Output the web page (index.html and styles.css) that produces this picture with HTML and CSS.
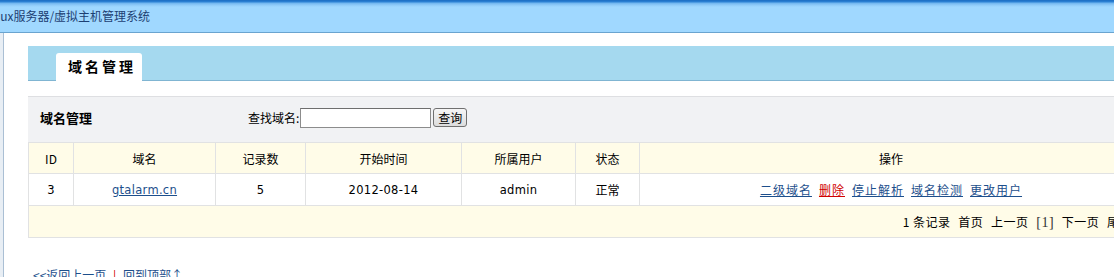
FILE: index.html
```html
<!DOCTYPE html>
<html lang="zh-CN">
<head>
  <meta charset="utf-8">
  <title>域名管理</title>
  <link rel="stylesheet" href="styles.css">
</head>
<body>

  <!-- Top bar -->
  <div class="topbar">
    <span class="title">Linux服务器/虚拟主机管理系统</span>
  </div>

  <div class="frame">
    <div class="main">

      <!-- Tab strip -->
      <div class="tabbar">
        <div class="tab">域名管理</div>
      </div>

      <div class="panel">
        <div class="toolbar">
          <span class="toolbar-title">域名管理</span>
          <form class="search">
            <label for="q">查找域名:</label>
            <input type="text" id="q" />
            <button type="button">查询</button>
          </form>
        </div>

        <table class="list">
          <thead>
            <tr>
              <th class="c-id">ID</th>
              <th class="c-domain">域名</th>
              <th class="c-count">记录数</th>
              <th class="c-date">开始时间</th>
              <th class="c-user">所属用户</th>
              <th class="c-state">状态</th>
              <th>操作</th>
            </tr>
          </thead>
          <tbody>
            <tr>
              <td class="num">3</td>
              <td class="num"><a href="#">gtalarm.cn</a></td>
              <td class="num">5</td>
              <td class="num">2012-08-14</td>
              <td class="num">admin</td>
              <td>正常</td>
              <td>
                <div class="ops">
                  <a href="#">二级域名</a>
                  <a href="#" class="danger">删除</a>
                  <a href="#">停止解析</a>
                  <a href="#">域名检测</a>
                  <a href="#">更改用户</a>
                </div>
              </td>
            </tr>
          </tbody>
          <tfoot>
            <tr>
              <td colspan="7" class="pager">
                <span>1 条记录</span>
                <span>首页</span>
                <span>上一页</span>
                <span class="cur">[1]</span>
                <span>下一页</span>
                <span>尾页</span>
              </td>
            </tr>
          </tfoot>
        </table>
      </div>

      <div class="backlinks">
        <a href="#">&lt;&lt;返回上一页</a>
        <span class="sep">|</span>
        <a href="#">回到顶部↑</a>
      </div>

    </div>
  </div>

</body>
</html>
```

FILE: styles.css
```css
* {
  box-sizing: border-box;
  margin: 0;
  padding: 0;
}

html,
body {
  overflow: hidden;
}

body {
  font-family: "Noto Sans CJK SC", "DejaVu Sans", sans-serif;
  font-size: 12px;
  color: black;
  background: white;
  width: 1160px;
}

/* top bar */
.topbar {
  height: 33px;
  background: linear-gradient(to bottom, #1b6cc2 0px, #2f84d6 2px, #6fb4ee 3px, #8fcaf8 5px, #a0d8ff 7px, #a0d8ff 100%);
  border-bottom: 1px solid #6aa4cf;
  padding-top: 9px;
  line-height: 14px;
  overflow: hidden;
  white-space: nowrap;
}

.title {
  display: inline-block;
  margin-left: -17px;
  color: #1d3f73;
  font-size: 12px;
}

/* page frame */
.frame {
  background: #e8eef4;
  padding-left: 3px;
}

.main {
  background: white;
  border-left: 1px solid #aabfd4;
  padding: 13px 0 12px 24px;
}

.tabbar {
  height: 35px;
  background: #a5d9ef;
  border-bottom: 1px solid #80b5d2;
  padding-top: 7px;
  padding-left: 28px;
}

.tab {
  width: 86px;
  height: 28px;
  background: white;
  border-radius: 3px 3px 0 0;
  padding-left: 12px;
  line-height: 27px;
  font-size: 14px;
  font-weight: bold;
  letter-spacing: 3px;
}

.panel {
  margin-top: 15px;
  background: #f1f2f4;
  border-top: 1px solid #dedfe2;
}

.toolbar {
  display: flex;
  align-items: center;
  height: 45px;
  padding: 0 12px 4px;
}

.toolbar-title {
  font-size: 13px;
  font-weight: bold;
  width: 208px;
}

.search {
  display: flex;
  align-items: center;
}

.search input {
  width: 131px;
  height: 20px;
  border: 1px solid #8c8c8c;
  border-top-color: #6e6e6e;
  background: white;
  margin-left: 1px;
}

.search button {
  width: 34px;
  height: 19px;
  margin-left: 2px;
  font-family: inherit;
  font-size: 12px;
  line-height: 15px;
  border: 1px solid #707070;
  border-radius: 3px;
  background: linear-gradient(to bottom, #f6f6f6, #dcdcdc);
}

/* list table */
.list {
  width: 1115px;
  border-collapse: collapse;
  background: white;
}

.list th,
.list td {
  border: 1px solid #e1e2e3;
  height: 32px;
  padding: 0;
  text-align: center;
  font-weight: normal;
}

.list thead th {
  height: 31px;
  background: #fffce8;
}

.c-id { width: 45px; }
.c-domain { width: 142px; }
.c-count { width: 90px; }
.c-date { width: 156px; }
.c-user { width: 114px; }
.c-state { width: 64px; }

.num {
  font-family: "DejaVu Sans", sans-serif;
  font-size: 11.5px;
  letter-spacing: 0.3px;
}

.list a {
  color: #1d4f8c;
}

.ops {
  display: flex;
  justify-content: center;
  gap: 7px;
}

.ops a {
  letter-spacing: 1px;
}

.ops a.danger {
  color: #d00000;
}

.list tfoot td {
  background: #fffce8;
  text-align: right;
  padding-right: 10px;
}

.pager span {
  margin-left: 5px;
  letter-spacing: 0.5px;
}

.pager .cur {
  font-family: "Liberation Serif", serif;
  font-size: 14px;
  color: #333;
}

/* back links */
.backlinks {
  margin-top: 28px;
  padding-left: 5px;
  font-size: 12px;
}

.backlinks a {
  color: #1d4f8c;
  text-decoration: none;
}

.backlinks .sep {
  color: #d00000;
  margin: 0 4px;
}
```
